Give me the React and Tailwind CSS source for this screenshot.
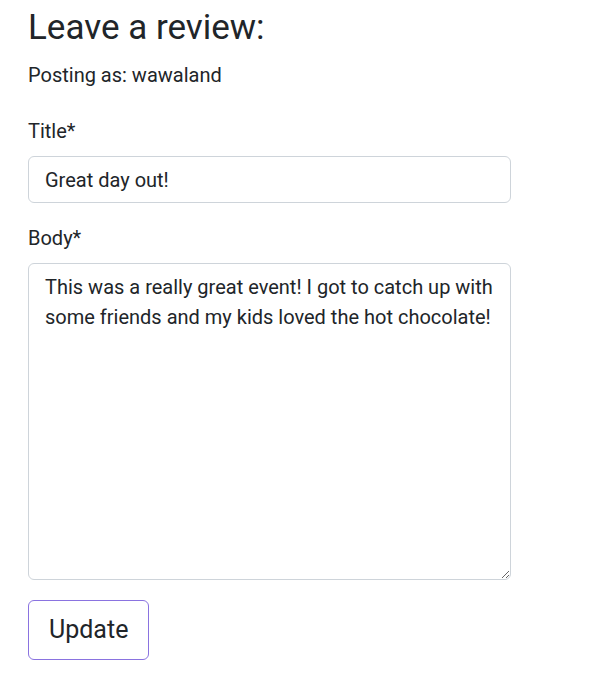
import React from 'react';

export default function App() {
    return (
        <div className="min-h-screen bg-white text-[#212529] font-['Roboto',sans-serif]">
            <div className="pl-[28px] pt-[7px] w-[511px]">
                <h2 className="text-[35px] leading-[1.2] font-normal">Leave a review:</h2>
                <p className="text-[20px] leading-[1.5] mt-[11px]">Posting as: wawaland</p>

                <form className="mt-[26px]" onSubmit={(e) => e.preventDefault()}>
                    <div className="mb-[20px]">
                        <label className="block text-[20px] leading-[1.5] mb-[10px]">Title*</label>
                        <input
                            type="text"
                            defaultValue="Great day out!"
                            className="block w-full h-[47px] px-[16px] text-[20px] border border-[#ced4da] rounded-[6px] outline-none"
                        />
                    </div>
                    <div className="mb-[20px]">
                        <label className="block text-[20px] leading-[1.5] mb-[10px]">Body*</label>
                        <textarea
                            defaultValue="This was a really great event! I got to catch up with some friends and my kids loved the hot chocolate!"
                            className="block w-full h-[317px] px-[16px] py-[8px] text-[20px] leading-[1.5] border border-[#ced4da] rounded-[6px] outline-none resize-y"
                        />
                    </div>
                    <button
                        type="submit"
                        className="h-[60px] px-[20px] text-[25px] leading-[1.5] border border-[#8a73e0] rounded-[6px] bg-white"
                    >
                        Update
                    </button>
                </form>
            </div>
        </div>
    );
}
